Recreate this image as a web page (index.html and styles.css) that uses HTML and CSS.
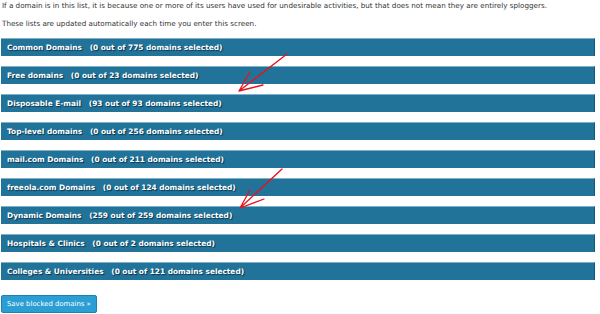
FILE: index.html
```html
<!DOCTYPE html>
<html lang="en">
<head>
  <meta charset="UTF-8">
  <title>Blocked domains</title>
  <link rel="stylesheet" href="styles.css">
</head>
<body>
  <div class="page">
    <p class="intro">If a domain is in this list, it is because one or more of its users have used for undesirable activities, but that does not mean they are entirely sploggers.</p>
    <p class="intro">These lists are updated automatically each time you enter this screen.</p>

    <div class="lists">
      <div class="list-bar">Common Domains   (0 out of 775 domains selected)</div>
      <div class="list-bar">Free domains   (0 out of 23 domains selected)</div>
      <div class="list-bar">Disposable E-mail   (93 out of 93 domains selected)</div>
      <div class="list-bar">Top-level domains   (0 out of 256 domains selected)</div>
      <div class="list-bar">mail.com Domains   (0 out of 211 domains selected)</div>
      <div class="list-bar">freeola.com Domains   (0 out of 124 domains selected)</div>
      <div class="list-bar">Dynamic Domains   (259 out of 259 domains selected)</div>
      <div class="list-bar">Hospitals &amp; Clinics   (0 out of 2 domains selected)</div>
      <div class="list-bar">Colleges &amp; Universities   (0 out of 121 domains selected)</div>
    </div>

    <button class="save-btn">Save blocked domains &raquo;</button>
  </div>

  <!-- hand-drawn red arrows over the screenshot -->
  <svg class="marks" width="600" height="314" viewBox="0 0 600 314">
    <g stroke="#e8131b" stroke-width="1.3" fill="none" stroke-linecap="round">
      <path d="M287 54 L239 91 M239 91 L250 72 M239 91 L263 85"/>
      <path d="M282 169 L240 208 M240 208 L250 190 M240 208 L264 199"/>
    </g>
  </svg>
</body>
</html>
```

FILE: styles.css
```css
body {
  margin: 0;
  font-family: "DejaVu Sans", Verdana, sans-serif;
  font-size: 7.2px;
  color: #333;
  background: #fff;
}

.page {
  position: relative;
  padding: 0 5px 0 1px;
}

.intro {
  margin: 0;
  padding-left: 1px;
  line-height: 10px;
  white-space: nowrap;
}

.intro:first-child {
  padding-top: 1px;
}

.intro + .intro {
  margin-top: 8px;
}

.lists {
  margin-top: 9px;
  display: flex;
  flex-direction: column;
  gap: 10px;
}

.list-bar {
  height: 17px;
  line-height: 17px;
  padding-left: 6px;
  background-color: #22739a;
  border-top: 1px solid #7fb1c9;
  border-right: 1px solid #17597a;
  color: #fff;
  font-size: 7.4px;
  font-weight: bold;
  text-shadow: 1px 1px 1px #0b3347;
  white-space: pre;
}

.save-btn {
  margin-top: 15px;
  height: 18px;
  padding: 0 5px;
  background-color: #2b9fd4;
  border: 1px solid #1c82b3;
  border-radius: 2px;
  color: #fff;
  font-family: "DejaVu Sans", Verdana, sans-serif;
  font-size: 6.9px;
  cursor: pointer;
}

.marks {
  position: absolute;
  left: 0;
  top: 0;
  pointer-events: none;
}
```
